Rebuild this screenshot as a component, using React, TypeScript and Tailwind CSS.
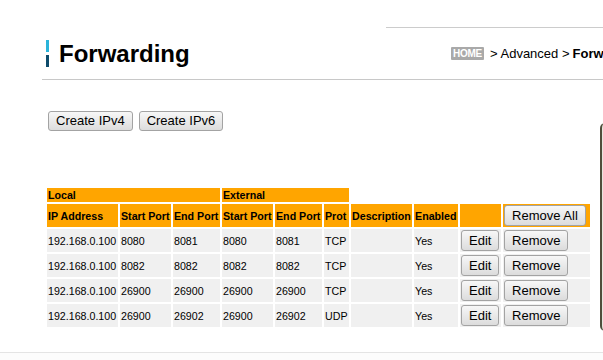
import React from "react";

const rules = [
  ["192.168.0.100", "8080", "8081", "8080", "8081", "TCP", "", "Yes"],
  ["192.168.0.100", "8082", "8082", "8082", "8082", "TCP", "", "Yes"],
  ["192.168.0.100", "26900", "26900", "26900", "26900", "TCP", "", "Yes"],
  ["192.168.0.100", "26900", "26902", "26900", "26902", "UDP", "", "Yes"],
];

const btn =
  "h-[21px] px-[7px] border border-[#a3a3a3] rounded-[3px] bg-linear-to-b from-[#f7f7f7] to-[#dcdcdc] text-[13px] leading-[19px] font-normal text-black whitespace-nowrap";

const createBtn =
  "h-[20px] px-[7px] border border-[#a3a3a3] rounded-[3px] bg-linear-to-b from-[#f7f7f7] to-[#dcdcdc] text-[13px] leading-[18px] text-black whitespace-nowrap";

const App = () => {
  return (
    <div
      className="relative w-[603px] h-[360px] overflow-hidden bg-white flex flex-col"
      style={{ fontFamily: '"Liberation Sans", Arial, sans-serif' }}
    >
      {/* top rule */}
      <div className="pt-[27px]">
        <div className="ml-[386px] h-px bg-[#cccccc]" />
      </div>

      {/* title + breadcrumb */}
      <div className="flex items-center ml-[46px] mt-[12px] h-[27px] whitespace-nowrap">
        <div className="flex flex-col w-[3px] shrink-0">
          <div className="h-[12px] bg-[#2ab4da]" />
          <div className="h-[3px]" />
          <div className="h-[12px] bg-[#0d4b6b]" />
        </div>
        <h1 className="ml-[10px] w-[392px] shrink-0 text-[24px] leading-[27px] font-bold text-black">
          Forwarding
        </h1>
        <div className="flex items-center text-[13px] leading-[16px] text-black shrink-0">
          <span className="h-[13px] w-[33px] rounded-[1px] bg-[#a9a9a9] text-white text-[10px] leading-[13px] font-bold text-center tracking-[-0.3px]">
            HOME
          </span>
          <span className="ml-[6px]">&gt; Advanced &gt; </span>
          <span className="ml-[3px] font-bold">Forwarding</span>
        </div>
      </div>

      {/* header rule */}
      <div className="ml-[42px] mt-[12px] h-px bg-[#c8c8c8]" />

      {/* create buttons */}
      <div className="flex gap-[6px] ml-[48px] mt-[31px]">
        <button className={createBtn}>Create IPv4</button>
        <button className={createBtn}>Create IPv6</button>
      </div>

      {/* forwarding table */}
      <table className="ml-[45px] mt-[55px] w-[547px] table-fixed border-separate border-spacing-[2px] text-[10.67px] leading-[12px] text-black">
        <colgroup>
          <col className="w-[71px]" />
          <col className="w-[51px]" />
          <col className="w-[47px]" />
          <col className="w-[51px]" />
          <col className="w-[47px]" />
          <col className="w-[25px]" />
          <col className="w-[61px]" />
          <col className="w-[44px]" />
          <col className="w-[41px]" />
          <col className="w-[87px]" />
        </colgroup>
        <thead>
          <tr className="font-bold">
            <td colSpan={3} className="bg-[#ffa500] p-[1px] h-[14px]">
              Local
            </td>
            <td colSpan={3} className="bg-[#ffa500] p-[1px]">
              External
            </td>
          </tr>
          <tr className="font-bold whitespace-nowrap">
            <td className="bg-[#ffa500] p-[1px] h-[23px]">IP Address</td>
            <td className="bg-[#ffa500] p-[1px]">Start Port</td>
            <td className="bg-[#ffa500] p-[1px]">End Port</td>
            <td className="bg-[#ffa500] p-[1px]">Start Port</td>
            <td className="bg-[#ffa500] p-[1px]">End Port</td>
            <td className="bg-[#ffa500] p-[1px]">Prot</td>
            <td className="bg-[#ffa500] p-[1px]">Description</td>
            <td className="bg-[#ffa500] p-[1px]">Enabled</td>
            <td className="bg-[#ffa500] p-[1px]"></td>
            <td className="bg-[#ffa500] p-[1px]">
              <button className={btn}>Remove All</button>
            </td>
          </tr>
        </thead>
        <tbody>
          {rules.map((r, i) => (
            <tr key={i} className="whitespace-nowrap">
              {r.map((c, j) => (
                <td key={j} className="bg-[#f0f0f0] p-[1px] h-[23px]">
                  {c}
                </td>
              ))}
              <td className="bg-[#f0f0f0] p-[1px]">
                <button className={btn}>Edit</button>
              </td>
              <td className="bg-[#f0f0f0] p-[1px]">
                <button className={btn}>Remove</button>
              </td>
            </tr>
          ))}
        </tbody>
      </table>

      {/* footer rule */}
      <div className="mt-auto h-[8px] border-t border-[#e4e4e4] bg-[#fcfcfc]" />

      {/* side panel peeking in from the right */}
      <div className="absolute left-[600px] top-[123px] w-[12px] h-[208px] rounded-l-[5px] border-l-2 border-[#4f4f3c] bg-[#e6e6de]" />
    </div>
  );
};

export default App;
